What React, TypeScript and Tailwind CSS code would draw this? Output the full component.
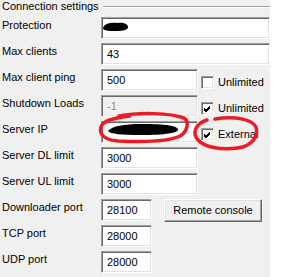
import React from "react";

const font = { fontFamily: '"Liberation Sans", Arial, sans-serif' };

function Edit({ value, disabled, w }: { value: string; disabled?: boolean; w: "wide" | "mid" | "port" }) {
  const width = w === "wide" ? "w-[169px]" : w === "mid" ? "w-[97px]" : "w-[51px]";
  return (
    <div
      className={`h-[22px] ${width} shrink-0 border border-t-[#a0a0a0] border-l-[#a0a0a0] border-b-white border-r-white shadow-[inset_1px_1px_0_#696969,inset_-1px_-1px_0_#e3e3e3] flex items-center pl-[5px] leading-[13px] ${
        disabled ? "bg-[#f0f0f0] text-[#8d8d8d]" : "bg-white text-black"
      }`}
    >
      {value}
    </div>
  );
}

function Check({ label, checked }: { label: string; checked?: boolean }) {
  return (
    <div className="mt-[7px] ml-[3px] flex shrink-0 items-center gap-[4px] leading-[13px] whitespace-nowrap">
      <div className="w-[13px] h-[13px] shrink-0 bg-white border border-t-[#a0a0a0] border-l-[#a0a0a0] border-b-white border-r-white shadow-[inset_1px_1px_0_#696969,inset_-1px_-1px_0_#e3e3e3] flex items-center justify-center">
        {checked && (
          <svg width="9" height="9" viewBox="0 0 9 9">
            <path d="M1 4 L3 6 L7 2 M1 5 L3 7 L7 3 M1 6 L3 8 L7 4" stroke="#000" strokeWidth="1" fill="none" shapeRendering="crispEdges" />
          </svg>
        )}
      </div>
      <span>{label}</span>
    </div>
  );
}

function Row({ label, children }: { label: string; children: React.ReactNode }) {
  return (
    <div className="flex h-[22px] items-start">
      <div className="w-[101px] shrink-0 pl-[2px] pt-[2px] leading-[13px] whitespace-nowrap">{label}</div>
      {children}
    </div>
  );
}

export default function App() {
  return (
    <div className="w-[300px] h-[277px] bg-white text-[11px] text-black relative overflow-hidden" style={font}>
      <div className="w-[270px] h-full bg-[#f0f0f0] flex flex-col">
        {/* group title */}
        <div className="flex h-[17px]">
          <span className="pl-[2px] pr-[4px] leading-[13px] whitespace-nowrap">Connection settings</span>
          <div className="flex-1 mt-[6px] h-[2px] border-t border-t-[#a0a0a0] border-b border-b-white" />
        </div>

        <div className="flex flex-col gap-[4px]">
          <Row label="Protection">
            <Edit value="" w="wide" />
          </Row>
          <Row label="Max clients">
            <Edit value="43" w="wide" />
          </Row>
          <Row label="Max client ping">
            <Edit value="500" w="mid" />
            <Check label="Unlimited" />
          </Row>
          <Row label="Shutdown Loads">
            <Edit value="-1" disabled w="mid" />
            <Check label="Unlimited" checked />
          </Row>
          <Row label="Server IP">
            <Edit value="" w="mid" />
            <Check label="External" checked />
          </Row>
          <Row label="Server DL limit">
            <Edit value="3000" w="mid" />
          </Row>
          <Row label="Server UL limit">
            <Edit value="3000" w="mid" />
          </Row>
          <Row label="Downloader port">
            <Edit value="28100" w="port" />
            <button className="ml-[12px] h-[23px] w-[98px] shrink-0 whitespace-nowrap bg-[#f0f0f0] border border-t-white border-l-white border-b-[#696969] border-r-[#696969] shadow-[inset_-1px_-1px_0_#a0a0a0,inset_1px_1px_0_#e3e3e3] leading-[13px] text-black">
              Remote console
            </button>
          </Row>
          <Row label="TCP port">
            <Edit value="28000" w="port" />
          </Row>
          <Row label="UDP port">
            <Edit value="28000" w="port" />
          </Row>
        </div>
      </div>

      {/* redactions and markings drawn over the dialog */}
      <svg className="absolute left-0 top-0 pointer-events-none" width="300" height="277" viewBox="0 0 300 277">
        <path d="M103 28 C104 23 112 22 118 23 C123 22 128 24 128 27 C128 31 120 31 112 31 C106 31 103 30 103 28 Z" fill="#000" />
        <path d="M108 131 C112 126 125 124 140 124 C160 124 176 125 178 129 C179 133 165 135 140 135 C122 135 110 134 108 131 Z" fill="#000" />
        <path
          d="M119 116 C140 112 170 113 184 118 C190 122 187 132 180 136 C168 142 140 142 118 141 C104 140 99 134 101 127 C103 121 112 118 130 116"
          stroke="#ed1c24"
          strokeWidth="3.5"
          fill="none"
          strokeLinecap="round"
        />
        <path
          d="M215 119 C235 116 252 119 256 127 C259 136 252 146 238 148 C222 150 205 148 198 140 C192 133 195 124 207 120"
          stroke="#ed1c24"
          strokeWidth="3.5"
          fill="none"
          strokeLinecap="round"
        />
      </svg>
    </div>
  );
}
